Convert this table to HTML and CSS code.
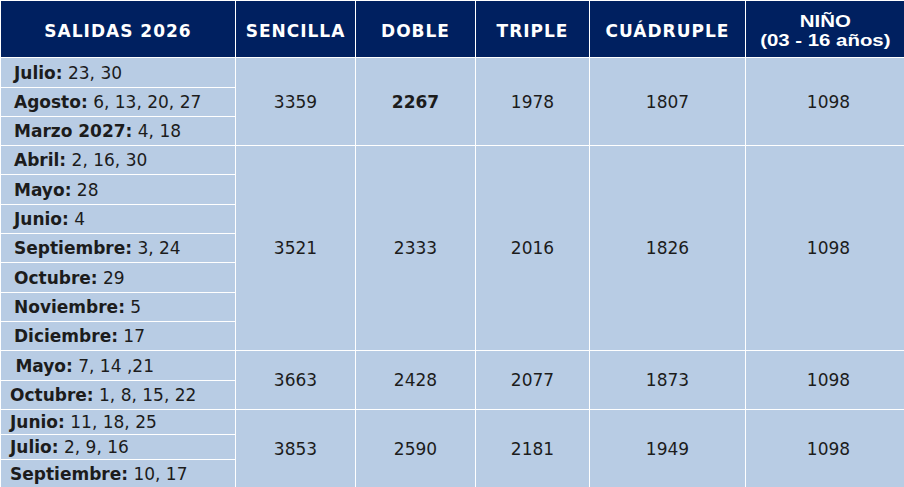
FILE: index.html
```html
<!DOCTYPE html>
<html lang="es">
<head>
<meta charset="utf-8">
<title>Salidas 2026</title>
<link rel="stylesheet" href="styles.css">
</head>
<body>
<table class="prices">
  <colgroup>
    <col class="c1"><col class="c2"><col class="c3"><col class="c4"><col class="c5"><col class="c6">
  </colgroup>
  <thead>
    <tr class="hrow">
      <th>SALIDAS 2026</th>
      <th>SENCILLA</th>
      <th>DOBLE</th>
      <th>TRIPLE</th>
      <th>CUÁDRUPLE</th>
      <th class="arial"><span class="wide">NIÑO<br>(03 - 16 años)</span></th>
    </tr>
  </thead>
  <tbody>
    <tr class="h29">
      <td class="date"><b>Julio:</b> 23, 30</td>
      <td rowspan="3">3359</td>
      <td rowspan="3"><b>2267</b></td>
      <td rowspan="3">1978</td>
      <td rowspan="3">1807</td>
      <td rowspan="3">1098</td>
    </tr>
    <tr class="h28"><td class="date"><b>Agosto:</b> 6, 13, 20, 27</td></tr>
    <tr class="h28"><td class="date"><b>Marzo 2027:</b> 4, 18</td></tr>

    <tr class="h28">
      <td class="date"><b>Abril:</b> 2, 16, 30</td>
      <td rowspan="7">3521</td>
      <td rowspan="7">2333</td>
      <td rowspan="7">2016</td>
      <td rowspan="7">1826</td>
      <td rowspan="7">1098</td>
    </tr>
    <tr class="h29"><td class="date"><b>Mayo:</b> 28</td></tr>
    <tr class="h28"><td class="date"><b>Junio:</b> 4</td></tr>
    <tr class="h28"><td class="date"><b>Septiembre:</b> 3, 24</td></tr>
    <tr class="h29"><td class="date"><b>Octubre:</b> 29</td></tr>
    <tr class="h28"><td class="date"><b>Noviembre:</b> 5</td></tr>
    <tr class="h28"><td class="date"><b>Diciembre:</b> 17</td></tr>

    <tr class="h29">
      <td class="date tight">&nbsp;<b>Mayo:</b> 7, 14 ,21</td>
      <td rowspan="2">3663</td>
      <td rowspan="2">2428</td>
      <td rowspan="2">2077</td>
      <td rowspan="2">1873</td>
      <td rowspan="2">1098</td>
    </tr>
    <tr class="h28"><td class="date tight"><b>Octubre:</b> 1, 8, 15, 22</td></tr>

    <tr class="h24">
      <td class="date tight"><b>Junio:</b> 11, 18, 25</td>
      <td rowspan="3">3853</td>
      <td rowspan="3">2590</td>
      <td rowspan="3">2181</td>
      <td rowspan="3">1949</td>
      <td rowspan="3">1098</td>
    </tr>
    <tr class="h24"><td class="date tight"><b>Julio:</b> 2, 9, 16</td></tr>
    <tr class="h28"><td class="date tight"><b>Septiembre:</b> 10, 17</td></tr>
  </tbody>
</table>
</body>
</html>
```
FILE: styles.css
```css
html, body {
  margin: 0;
  padding: 0;
  background: #ffffff;
  overflow: hidden;
}

.prices {
  border-collapse: separate;
  border-spacing: 1px;
  table-layout: fixed;
  width: 911px;
  font-family: "DejaVu Sans", "Inter", sans-serif;
  color: #1c1c1c;
}

.c1 { width: 234px; }
.c2 { width: 119px; }
.c3 { width: 119px; }
.c4 { width: 113px; }
.c5 { width: 155px; }
.c6 { width: 165px; }

.prices th,
.prices td {
  padding: 0;
  overflow: hidden;
  white-space: nowrap;
}

.prices th {
  background: #002060;
  color: #ffffff;
  font-weight: 700;
  font-size: 17px;
  letter-spacing: 1px;
  text-align: center;
  vertical-align: middle;
  padding-top: 3px;
}

.prices th.arial {
  font-family: "Liberation Sans", Arial, sans-serif;
  font-weight: 700;
  font-size: 17px;
  letter-spacing: 0;
  line-height: 19px;
  padding-top: 3px;
  padding-right: 6px;
}

.wide {
  display: inline-block;
  transform: scaleX(1.2);
}

.hrow { height: 56px; }
.h29 { height: 29px; }
.h28 { height: 28px; }
.h24 { height: 24px; }

.prices td {
  background: #b8cce4;
  font-size: 17px;
  font-weight: 400;
  text-align: center;
  vertical-align: middle;
}

.prices td b {
  font-weight: 700;
}

.prices td.date {
  text-align: left;
  padding-left: 13px;
}

.prices td.date.tight {
  padding-left: 9px;
}
```
